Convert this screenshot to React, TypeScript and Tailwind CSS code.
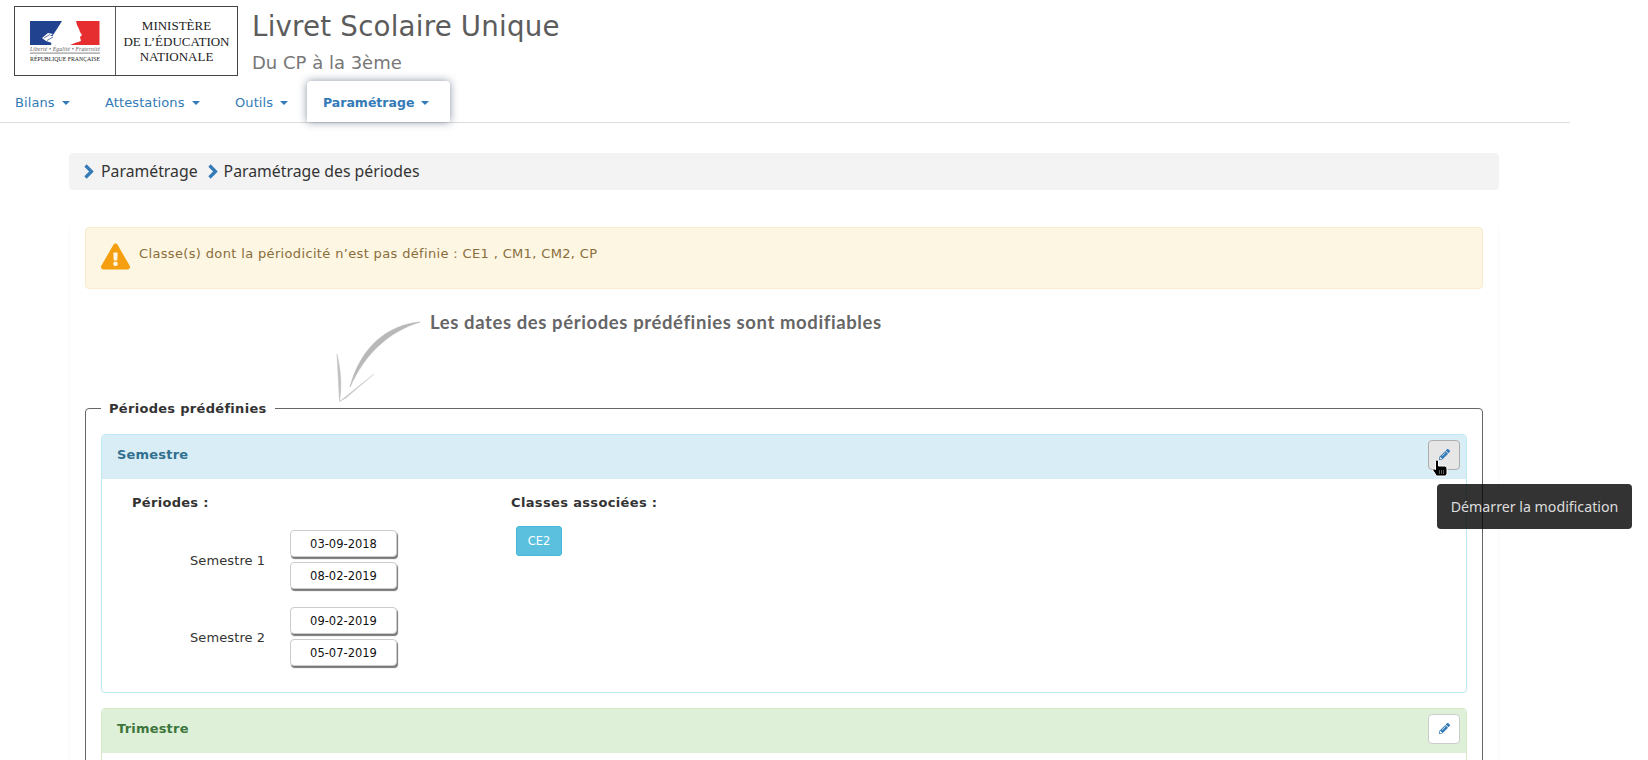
import React from 'react';
import { FaPencilAlt, FaExclamationTriangle } from 'react-icons/fa';

const Caret = () => (
  <span className="ml-[7px] inline-block w-0 h-0 align-middle border-x-[4px] border-x-transparent border-t-[4px] border-t-[#337ab7]" />
);

const Chevron = ({ className }: { className?: string }) => (
  <svg width="11" height="15" viewBox="0 0 11 15" className={className}>
    <path d="M2.5 1.500 L8.500 7.500 L2.500 13.500" fill="none" stroke="#337ab7" strokeWidth="3.2" />
  </svg>
);

const Logo = () => (
  <div className="flex w-[224px] h-[70px] shrink-0 border border-[#444] bg-white">
    <div className="w-[101px] shrink-0 border-r border-[#555]">
      <svg width="100" height="68" viewBox="0 0 100 68">
        <path d="M15 14 H47 L42 22 L38 28 L36 38 H15 Z" fill="#21428f" />
        <path d="M61 14 H84.500 V38 H55 L60 36 L66 34 L65 30 L67 28 L65 25 L64 22 L62 18 Z" fill="#e62d2f" />
        <path d="M27 31 L33 26 L38 27 L35 29 L46 29 L41 33 L37 36 L31 34 Z" fill="#fff" />
        <path d="M29 31 L35 27.500 M32 33.500 L38 30" stroke="#21428f" strokeWidth="0.7" />
        <text x="15" y="44" textLength="70" fontSize="5.500" fontStyle="italic" fill="#555" fontFamily="'Liberation Serif', serif">Liberté • Égalité • Fraternité</text>
        <rect x="15" y="45.500" width="70" height="1.200" fill="#999" />
        <text x="15" y="54" textLength="70" lengthAdjust="spacingAndGlyphs" fontSize="6" fill="#222" fontFamily="'Liberation Serif', serif">RÉPUBLIQUE FRANÇAISE</text>
      </svg>
    </div>
    <div className="flex-1 flex flex-col items-center justify-center pt-[1px] font-['Liberation_Serif',serif] text-[13px] leading-[15.5px] text-[#222]">
      <span>MINISTÈRE</span>
      <span className="whitespace-nowrap">DE L’ÉDUCATION</span>
      <span>NATIONALE</span>
    </div>
  </div>
);

const NavItem = ({ label, className }: { label: string; className: string }) => (
  <a className={`flex items-center pt-[2px] text-[#337ab7] text-[13px] tracking-[0.1px] ${className}`}>
    {label}
    <Caret />
  </a>
);

const Arrow = () => (
  <svg width="100" height="90" viewBox="0 0 100 90" className="absolute left-[332px] top-[316px]">
    <path d="M88 6 C56 9 29 30 18 71 C33 38 56 16 88 6 Z" fill="#b8b8b8" stroke="#b8b8b8" strokeWidth="0.6" />
    <path d="M7.500 85.500 L5 38 C9 56 10 70 7.500 85.500 Z" fill="#c0c0c0" stroke="#c0c0c0" strokeWidth="0.5" />
    <path d="M7.500 85.500 L42 58 L14 82 Z" fill="#c8c8c8" stroke="#c8c8c8" strokeWidth="0.5" />
  </svg>
);

const DateField = ({ value }: { value: string }) => (
  <div className="w-[107px] h-[27px] flex items-center justify-center pt-[3px] rounded-[4px] border border-[#ccc] bg-white text-[11.5px] text-[#111] shadow-[1px_2px_1px_#777]">
    {value}
  </div>
);

const Period = ({ label, start, end }: { label: string; start: string; end: string }) => (
  <div className="flex items-center">
    <span className="w-[134px] pl-[58px] pt-[4px] mr-[24px] text-[#333] whitespace-nowrap text-[13px] tracking-[0.1px]">{label}</span>
    <div className="flex flex-col gap-[5px]">
      <DateField value={start} />
      <DateField value={end} />
    </div>
  </div>
);

const EditButton = ({ active }: { active?: boolean }) => (
  <button className={`w-[32px] h-[30px] flex items-center justify-center rounded-[4px] border ${active ? 'bg-[#e6e6e6] border-[#adadad]' : 'bg-white border-[#ccc]'}`}>
    <FaPencilAlt className="text-[#337ab7] text-[11px]" />
  </button>
);

export default function App() {
  return (
    <div className="relative h-[760px] overflow-hidden bg-white font-['DejaVu_Sans',sans-serif] text-[13px] text-[#333]">
      <div className="w-[1570px]">
        {/* Header */}
        <header className="flex pl-[14px] pt-[6px] h-[81px]">
          <Logo />
          <div className="ml-[14px] pt-[1px] text-[#5c5c5c]">
            <h1 className="text-[27.700px] leading-[39px] tracking-[0.2px]">Livret Scolaire Unique</h1>
            <p className="mt-[5px] text-[18px] leading-[24px] text-[#777]">Du CP à la 3ème</p>
          </div>
        </header>

        {/* Nav */}
        <nav className="flex h-[41px] box-content border-b border-[#ddd]">
          <NavItem label="Bilans" className="pl-[15px] w-[105px]" />
          <NavItem label="Attestations" className="w-[130px]" />
          <NavItem label="Outils" className="w-[72px]" />
          <a className="flex items-center w-[143px] h-[41px] pl-[16px] pt-[3px] rounded-t-[4px] bg-white text-[#337ab7] font-bold text-[12.500px] shadow-[0_0_8px_rgba(40,60,90,0.55)]">
            Paramétrage
            <Caret />
          </a>
        </nav>

        {/* Main */}
        <main className="ml-[69px] w-[1430px] pt-[30px]">
          <div className="flex items-center h-[37px] px-[14px] rounded-[4px] bg-[#f3f3f3] font-['Noto_Sans',sans-serif] text-[15.800px] text-[#333]">
            <Chevron className="mr-[7px]" />
            <span>Paramétrage</span>
            <Chevron className="ml-[9px] mr-[6px]" />
            <span>Paramétrage des périodes</span>
          </div>

          <div className="mt-[35px] border-x border-[#fafafa] px-[15px] pt-[2px]">
            <div className="flex h-[62px] px-[15px] pt-[14px] rounded-[4px] border border-[#faebcc] bg-[#fcf6e2] text-[#8a6d3b]">
              <FaExclamationTriangle className="text-[#f59f10] text-[29px] shrink-0" />
              <span className="ml-[9px] mt-[2px] text-[13px] tracking-[0.35px]">Classe(s) dont la périodicité n’est pas définie : CE1 , CM1, CM2, CP</span>
            </div>

            <p className="mt-[23px] ml-[345px] h-[20px] font-['Lato',sans-serif] font-bold text-[18.500px] leading-[20px] text-[#666] tracking-[0.6px] whitespace-nowrap">
              Les dates des périodes prédéfinies sont modifiables
            </p>

            <fieldset className="mt-[67px] border border-[#666] rounded-[4px] px-[15px] pb-[15px]">
              <legend className="px-[8px] text-[13px] font-bold tracking-[0.3px] text-[#333]">Périodes prédéfinies</legend>

              <section className="mt-[15px] border border-[#bce8f1] rounded-[4px] h-[259px]">
                <div className="flex items-center justify-between h-[44px] pl-[15px] pr-[6px] pb-[4px] bg-[#d9edf7] rounded-t-[4px]">
                  <span className="font-bold text-[#31708f] tracking-[0.2px]">Semestre</span>
                  <EditButton active />
                </div>
                <div className="flex pl-[30px] pt-[15px]">
                  <div className="w-[379px]">
                    <h4 className="font-bold text-[13px] tracking-[0.3px] leading-[18px] text-[#333]">Périodes :</h4>
                    <div className="mt-[18px] -ml-[30px] pl-[30px] flex flex-col gap-[18px]">
                      <Period label="Semestre 1" start="03-09-2018" end="08-02-2019" />
                      <Period label="Semestre 2" start="09-02-2019" end="05-07-2019" />
                    </div>
                  </div>
                  <div>
                    <h4 className="font-bold text-[13px] tracking-[0.35px] leading-[18px] text-[#333] whitespace-nowrap">Classes associées :</h4>
                    <span className="mt-[14px] ml-[5px] pt-[2px] flex items-center justify-center w-[46px] h-[30px] rounded-[3px] border border-[#46b8da] bg-[#5bc0de] text-white text-[11.500px]">CE2</span>
                  </div>
                </div>
              </section>

              <section className="mt-[15px] border border-[#d6e9c6] rounded-[4px] h-[200px]">
                <div className="flex items-center justify-between h-[44px] pl-[15px] pr-[6px] pb-[4px] bg-[#dff0d8] rounded-t-[4px]">
                  <span className="font-bold text-[#3c763d] tracking-[0.2px]">Trimestre</span>
                  <EditButton />
                </div>
              </section>
            </fieldset>
          </div>
        </main>
      </div>

      <Arrow />

      {/* Hand cursor */}
      <svg width="16" height="18" viewBox="0 0 16 18" className="absolute left-[1432px] top-[459px]">
        <path d="M3.500 2 C3.500 .5 6.500 .5 6.500 2 V7 H13 C14.500 7.500 15 8.500 15 10 V15 L13.500 17 H4.500 L1 11.500 C.5 10 2 9.500 3.500 10.500 Z" fill="#000" stroke="#fff" strokeWidth="1" />
        <path d="M7.500 11 V15 M9.500 11 V15 M11.500 11 V15" stroke="#777" strokeWidth="0.8" />
      </svg>

      {/* Tooltip */}
      <div className="absolute left-[1437px] top-[484px] flex items-center justify-center w-[195px] h-[45px] rounded-[4px] bg-black/80 font-['Noto_Sans',sans-serif] text-[14.200px] text-[#ddd]">
        Démarrer la modification
      </div>
    </div>
  );
}
